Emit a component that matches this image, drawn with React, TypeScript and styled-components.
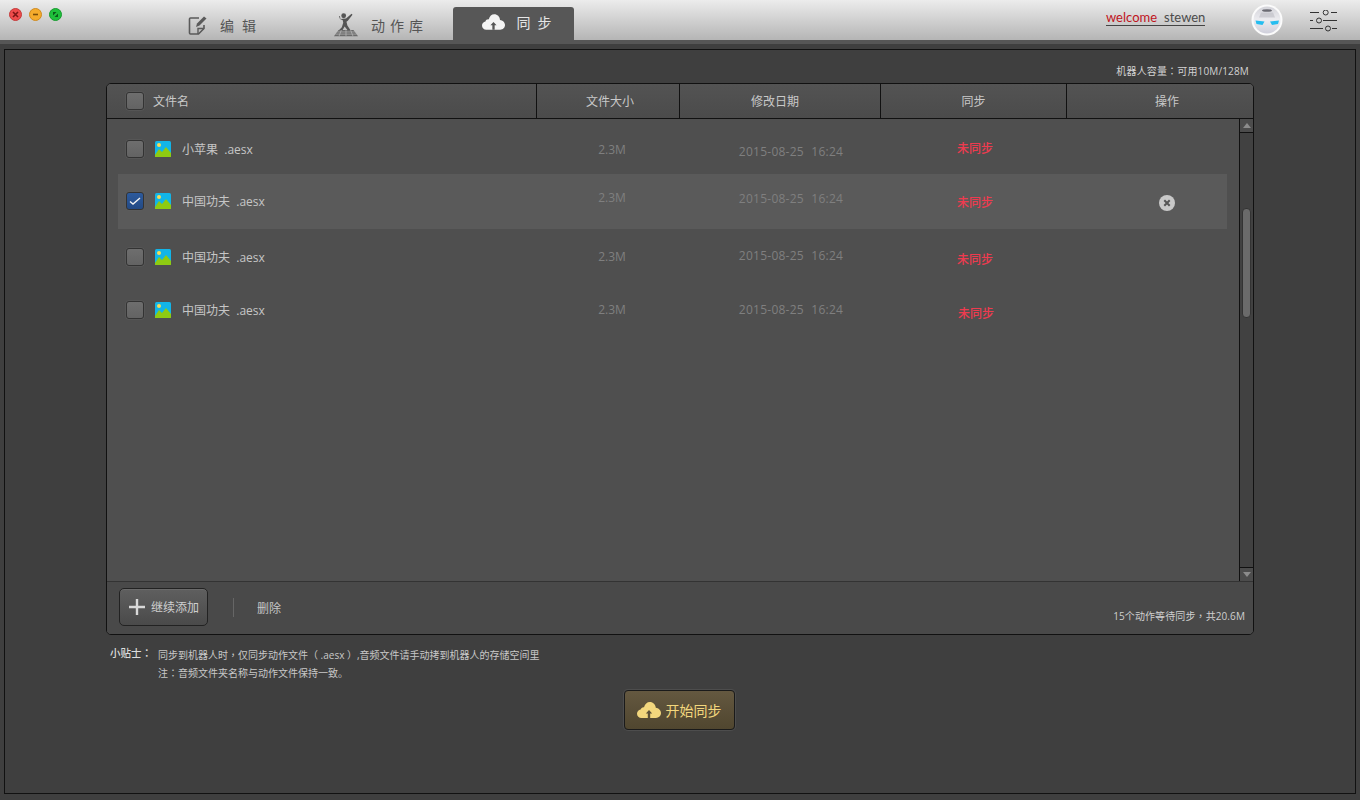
import styled, { createGlobalStyle } from "styled-components";

const GlobalStyle = createGlobalStyle`
  html, body {
    margin: 0;
    padding: 0;
    background: #3f3f3f;
  }
  body {
    font-family: "Open Sans", "Noto Sans CJK SC", sans-serif;
  }
`;

interface FileRow {
  id: number;
  title: string;
  height: number;
  checked?: boolean;
  active?: boolean;
  nameShift: number;
  sizeShift: number;
  dateShift: number;
  stateShift: number;
  stateLeft?: number;
}

const rows: FileRow[] = [
  { id: 1, title: "小苹果", height: 50, nameShift: -1, sizeShift: 0, dateShift: 2, stateShift: -1 },
  { id: 2, title: "中国功夫", height: 55, checked: true, active: true, nameShift: -2, sizeShift: -4, dateShift: -3, stateShift: 0 },
  { id: 3, title: "中国功夫", height: 56, nameShift: -1, sizeShift: -1, dateShift: -2, stateShift: 2 },
  { id: 4, title: "中国功夫", height: 53, nameShift: -4, sizeShift: -2, dateShift: -2, stateShift: 1, stateLeft: 1 },
];

const Page = styled.div`
  width: 1360px;
  height: 800px;
  overflow: hidden;
  display: flex;
  flex-direction: column;
  background: #3f3f3f;
`;

const TitleBar = styled.header`
  height: 40px;
  flex: none;
  display: flex;
  background: linear-gradient(#ececec, #b5b5b5);
  border-bottom: 4px solid #565656;
`;

const TrafficLights = styled.div`
  width: 176px;
  display: flex;
  gap: 7px;
  padding: 8px 0 0 9px;
  box-sizing: border-box;
`;

const Light = styled.span<{ $bg: string; $edge: string }>`
  width: 11px;
  height: 11px;
  border-radius: 50%;
  background: ${(p) => p.$bg};
  border: 1px solid ${(p) => p.$edge};
  display: flex;
  align-items: center;
  justify-content: center;
`;

const Tab = styled.div<{ $width: number; $spacing: number; $active?: boolean }>`
  width: ${(p) => p.$width}px;
  height: ${(p) => (p.$active ? "33px" : "40px")};
  margin-top: ${(p) => (p.$active ? "7px" : "0")};
  display: flex;
  align-items: center;
  justify-content: center;
  gap: 12px;
  flex: none;
  font-size: 14px;
  letter-spacing: ${(p) => p.$spacing}px;
  white-space: nowrap;
  color: ${(p) => (p.$active ? "#e6e6e6" : "#555")};
  background: ${(p) => (p.$active ? "#575757" : "transparent")};
  border-radius: ${(p) => (p.$active ? "3px 3px 0 0" : "0")};
  padding: ${(p) => (p.$active ? "0 0 3px 6px" : "10px 0 0 0")};
  box-sizing: border-box;

  span {
    margin-right: ${(p) => -p.$spacing}px;
  }
`;

const TabGap = styled.div<{ $width: number }>`
  width: ${(p) => p.$width}px;
  flex: none;
`;

const UserBlock = styled.div`
  margin-left: auto;
  display: flex;
  align-items: flex-start;
`;

const Welcome = styled.div`
  width: 99px;
  margin-top: 9px;
  font-family: "Lato", "Open Sans", sans-serif;
  font-size: 13px;
  line-height: 16px;
  color: #4b4b4b;
  white-space: nowrap;
  border-bottom: 1px solid #444;

  span {
    color: #c0141c;
    margin-right: 7px;
  }
`;

const Avatar = styled.svg`
  width: 32px;
  height: 32px;
  margin: 4px 0 0 46px;
  flex: none;
`;

const Settings = styled.svg`
  width: 28px;
  height: 22px;
  margin: 10px 22px 0 27px;
  flex: none;
`;

const Main = styled.main`
  flex: 1;
  margin: 5px 4px 6px 4px;
  border: 1px solid #111;
  background: #3f3f3f;
  display: flex;
  flex-direction: column;
  align-items: flex-start;
  padding: 0 0 0 101px;
  min-height: 0;
`;

const Capacity = styled.div`
  width: 1143px;
  height: 33px;
  flex: none;
  box-sizing: border-box;
  padding: 13px 0 0 0;
  text-align: right;
  font-size: 10px;
  letter-spacing: 0.15px;
  line-height: 15px;
  color: #d2d2d2;
`;

const Punct = styled.span`
  font-family: "Noto Sans CJK TC", sans-serif;
`;

const Panel = styled.section`
  width: 1148px;
  height: 552px;
  flex: none;
  box-sizing: border-box;
  border: 1px solid #111;
  border-radius: 5px;
  background: #4f4f4f;
  display: flex;
  flex-direction: column;
  overflow: hidden;
`;

const HeaderRow = styled.div`
  height: 34px;
  flex: none;
  display: grid;
  grid-template-columns: 429px 143px 201px 186px 1fr;
  border-bottom: 1px solid #111;
  background: linear-gradient(#535353, #4b4b4b);
`;

const HeaderCell = styled.div<{ $left?: number; $right?: number }>`
  display: flex;
  align-items: center;
  justify-content: center;
  font-size: 12px;
  color: #c9c9c9;
  padding-left: ${(p) => p.$left || 0}px;
  padding-right: ${(p) => p.$right || 0}px;
  border-left: 1px solid #111;
  box-sizing: border-box;
`;

const NameHeader = styled.div`
  display: flex;
  align-items: center;
  gap: 9px;
  padding-left: 19px;
  font-size: 12px;
  color: #c9c9c9;
`;

const Body = styled.div`
  flex: 1;
  min-height: 0;
  display: flex;
  border-bottom: 1px solid #333;
`;

const List = styled.div`
  flex: 1;
  padding: 5px 12px 0 11px;
  box-sizing: border-box;
`;

const Row = styled.div<{ $height: number; $active?: boolean }>`
  height: ${(p) => p.$height}px;
  display: grid;
  grid-template-columns: 419px 150px 208px 160px 1fr;
  align-items: center;
  background: ${(p) => (p.$active ? "#5a5a5a" : "transparent")};
`;

const NameCell = styled.div<{ $shift: number }>`
  display: flex;
  align-items: center;
  padding-left: 8px;
  margin-top: ${(p) => p.$shift}px;
  font-size: 12px;
  color: #c6c6c6;
  white-space: pre;
`;

const Check = styled.span<{ $checked?: boolean }>`
  width: 16px;
  height: 16px;
  flex: none;
  display: flex;
  align-items: center;
  justify-content: center;
  border-radius: 3px;
  border: 1px solid #333;
  box-shadow: 0 0 0 0.5px #5f5f5f;
  background: ${(p) => (p.$checked ? "linear-gradient(#2d5a9c, #234a85)" : "linear-gradient(#6e6e6e, #636363)")};
`;

const FileIcon = styled.svg`
  width: 16px;
  height: 16px;
  flex: none;
  margin: 0 11px 0 11px;
`;

const SizeCell = styled.div<{ $shift: number }>`
  text-align: center;
  font-size: 12px;
  color: #7f7f7f;
  margin-top: ${(p) => p.$shift * 2}px;
`;

const DateCell = styled(SizeCell)`
  word-spacing: 4px;
  letter-spacing: 0.25px;
`;

const StateCell = styled.div<{ $shift: number; $left?: number }>`
  text-align: center;
  font-size: 12px;
  font-weight: 500;
  color: #ee3b4f;
  margin-top: ${(p) => p.$shift * 2}px;
  padding-left: ${(p) => (p.$left || 0) * 2}px;
`;

const ActionCell = styled.div`
  display: flex;
  justify-content: flex-end;
  padding-right: 52px;
`;

const RemoveIcon = styled.svg`
  width: 16px;
  height: 16px;
  margin-top: 2px;
`;

const Scrollbar = styled.div`
  width: 13px;
  flex: none;
  display: flex;
  flex-direction: column;
  border-left: 1px solid #111;
  background: #414141;
`;

const ScrollButton = styled.div<{ $down?: boolean }>`
  height: 13px;
  flex: none;
  display: flex;
  align-items: center;
  justify-content: center;
  background: #4c4c4c;
  border-top: ${(p) => (p.$down ? "1px solid #111" : "none")};
  border-bottom: ${(p) => (p.$down ? "none" : "1px solid #111")};

  &::after {
    content: "";
    width: 0;
    height: 0;
    border-left: 4px solid transparent;
    border-right: 4px solid transparent;
    border-bottom: ${(p) => (p.$down ? "none" : "5px solid #8c8c8c")};
    border-top: ${(p) => (p.$down ? "5px solid #8c8c8c" : "none")};
  }
`;

const ScrollTrack = styled.div`
  flex: 1;
  padding: 75px 2px 0 2px;
`;

const ScrollThumb = styled.div`
  height: 110px;
  border-radius: 4px;
  background: #6a6a6a;
  border: 1px solid #333;
  box-sizing: border-box;
`;

const Footer = styled.div`
  height: 52px;
  flex: none;
  display: flex;
  align-items: center;
  padding: 0 8px 1px 12px;
  background: #494949;
  box-sizing: border-box;
`;

const AddButton = styled.button`
  width: 89px;
  height: 38px;
  margin-bottom: 1px;
  display: flex;
  align-items: center;
  gap: 6px;
  padding: 0 0 0 9px;
  box-sizing: border-box;
  border: 1px solid #222;
  border-radius: 5px;
  background: linear-gradient(#5f5f5f, #4a4a4a);
  box-shadow: inset 0 1px 0 #6a6a6a;
  color: #cfcfcf;
  font: 12px "Open Sans", "Noto Sans CJK SC", sans-serif;
`;

const Divider = styled.span`
  width: 1px;
  height: 19px;
  background: #666;
  margin: 0 23px 0 25px;
`;

const DeleteLink = styled.span`
  font-size: 12px;
  color: #c6c6c6;
`;

const WaitText = styled.span`
  margin-left: auto;
  padding: 16px 0 0 0;
  font-size: 10px;
  letter-spacing: 0.1px;
  color: #cfcfcf;
`;

const Tips = styled.div`
  display: flex;
  padding: 10px 0 0 4px;
  height: 44px;
  flex: none;
  box-sizing: border-box;
`;

const TipLabel = styled.div`
  width: 48px;
  font-size: 10.5px;
  line-height: 15px;
  font-weight: 500;
  color: #dcdcdc;
  flex: none;
`;

const TipLines = styled.div`
  font-size: 10px;
  line-height: 18px;
  padding-top: 1px;
  color: #c8c8c8;
`;

const SyncWrap = styled.div`
  width: 1146px;
  display: flex;
  justify-content: center;
  padding: 11px 0 0 0;
  box-sizing: border-box;
`;

const SyncButton = styled.button`
  width: 111px;
  height: 40px;
  display: flex;
  align-items: center;
  justify-content: center;
  gap: 5px;
  padding: 0;
  border: 1px solid #1a1a1a;
  border-radius: 4px;
  background: linear-gradient(#645840, #50462f);
  box-shadow: 0 0 0 1px #4d4d4d;
  color: #f3d77d;
  font: 14px "Open Sans", "Noto Sans CJK SC", sans-serif;
`;

const CloudUp = ({ fill, arrow, width, height }: { fill: string; arrow: string; width: number; height: number }) => (
  <svg width={width} height={height} viewBox="0 0 24 16" style={{ flex: "none" }}>
    <path
      d="M4.500 16C2 16 0 14.200 0 11.800 0 9.700 1.500 8 3.600 7.600 4 6 5.500 5 7 5.300 8 2 10 0 12.800 0c3.300 0 5.700 2.500 6 5.800 2.700.3 5.200 2.400 5.200 5.300 0 2.800-2.200 4.900-5 4.900z"
      fill={fill}
    />
    <path d="M12 8l-3.200 3.400h2V16h2.400v-4.600h2z" fill={arrow} />
  </svg>
);

const FileGlyph = () => (
  <FileIcon viewBox="0 0 16 16">
    <rect width="16" height="16" rx="1.500" fill="#12b5e8" />
    <circle cx="4" cy="4" r="2" fill="#f7dc55" />
    <path d="M0 14l4-6 3 3 4-5 5 6v3.500a.5.5 0 0 1-.5.5H.5a.5.5 0 0 1-.5-.5z" fill="#8ecb12" />
  </FileIcon>
);

const CheckBox = ({ checked }: { checked?: boolean }) => (
  <Check $checked={checked}>
    {checked && (
      <svg width="12" height="10" viewBox="0 0 12 10">
        <path d="M1 5.500l3 2.500 7-6" fill="none" stroke="#f2f2f2" strokeWidth="1.400" />
      </svg>
    )}
  </Check>
);

export default function App() {
  return (
    <Page>
      <GlobalStyle />
      <TitleBar>
        <TrafficLights>
          <Light $bg="#ee4b4b" $edge="#c43a3a">
            <svg width="7" height="7" viewBox="0 0 7 7">
              <path d="M1 1l5 5M6 1L1 6" stroke="#7c1515" strokeWidth="1.600" />
            </svg>
          </Light>
          <Light $bg="#f5ab2c" $edge="#cf8a1f">
            <svg width="7" height="7" viewBox="0 0 7 7">
              <path d="M1 3.500h5" stroke="#7a4d08" strokeWidth="1.600" />
            </svg>
          </Light>
          <Light $bg="#1fc13b" $edge="#169a2e">
            <svg width="7" height="7" viewBox="0 0 7 7">
              <path d="M1 1h3.500L1 4.500zM6 6H2.500L6 2.500z" fill="#0b5a1a" />
            </svg>
          </Light>
        </TrafficLights>
        <Tab $width={92} $spacing={8}>
          <svg width="20" height="20" viewBox="0 0 20 20" style={{ flex: "none" }}>
            <path d="M11 3H2.500A1 1 0 0 0 1.500 4v14a1 1 0 0 0 1 1h8l5.500-5.500V10" fill="none" stroke="#5a5a5a" strokeWidth="1.600" />
            <path d="M10 19v-5.500h6" fill="none" stroke="#5a5a5a" strokeWidth="1.400" />
            <path d="M8 12l1-3.500L16 1.500l2.500 2-7 7z" fill="#5a5a5a" />
          </svg>
          <span>编辑</span>
        </Tab>
        <TabGap $width={60} />
        <Tab $width={100} $spacing={5}>
          <svg width="26" height="26" viewBox="0 0 28 26" style={{ flex: "none" }}>
            <circle cx="11.500" cy="3" r="2.600" fill="#555" />
            <path
              d="M8 6.500l6-.5 6-5 1 1-5 6.500-1.500 1 1 4 3.500 5.500h-3l-3.500-4.500-2.500 4.500h-4l3.500-3.500 1.500-5-.5-2.500-3-1.500-1-3 1-.3z"
              fill="#555"
            />
            <path d="M6 18.500h16l5 6.500H1z" fill="#6a6a6a" />
            <path d="M4.500 20.500h19M2.500 22.800h23M9 18.500l-2.500 6.500M14 18.500v6.500M19 18.500l2.500 6.500" stroke="#c0c0c0" strokeWidth="0.700" />
          </svg>
          <span>动作库</span>
        </Tab>
        <TabGap $width={25} />
        <Tab $width={121} $spacing={7} $active>
          <CloudUp fill="#f4f4f4" arrow="#575757" width={23} height={16} />
          <span>同步</span>
        </Tab>
        <UserBlock>
          <Welcome>
            <span>welcome</span>stewen
          </Welcome>
          <Avatar viewBox="0 0 32 32">
            <defs>
              <linearGradient id="head" x1="0" y1="0" x2="0" y2="1">
                <stop offset="0" stopColor="#d4d4da" />
                <stop offset="0.5" stopColor="#ececf0" />
                <stop offset="1" stopColor="#cfcfdb" />
              </linearGradient>
            </defs>
            <circle cx="16" cy="16" r="15.500" fill="#fbfbfb" />
            <circle cx="16" cy="16" r="13.500" fill="url(#head)" />
            <ellipse cx="16" cy="6.500" rx="5" ry="1.300" fill="#6b6b73" />
            <path d="M10 8.500h12l2 5H8z" fill="#b4b4bc" opacity="0.500" />
            <path d="M4.500 16.500l9 1-2 3.500-6-1z" fill="#25bdf0" />
            <path d="M28 16.500l-9 1 2 3.500 6-1z" fill="#25bdf0" />
          </Avatar>
          <Settings viewBox="0 0 28 22" fill="none" stroke="#333" strokeWidth="1">
            <path d="M0 2.500h9M21 2.500h6M0 10.500h3M13 10.500h14M0 18.500h13M22 18.500h5" />
            <circle cx="15.700" cy="2.500" r="2.500" />
            <circle cx="9" cy="10.500" r="2.500" />
            <circle cx="18" cy="18.500" r="2.500" />
          </Settings>
        </UserBlock>
      </TitleBar>
      <Main>
        <Capacity>
          机器人容量<Punct>：</Punct>可用10M/128M
        </Capacity>
        <Panel>
          <HeaderRow>
            <NameHeader>
              <CheckBox />
              文件名
            </NameHeader>
            <HeaderCell $left={4}>文件大小</HeaderCell>
            <HeaderCell $right={10}>修改日期</HeaderCell>
            <HeaderCell>同步</HeaderCell>
            <HeaderCell $left={14}>操作</HeaderCell>
          </HeaderRow>
          <Body>
            <List>
              {rows.map((r) => (
                <Row key={r.id} $height={r.height} $active={r.active}>
                  <NameCell $shift={r.nameShift}>
                    <CheckBox checked={r.checked} />
                    <FileGlyph />
                    {r.title}  .aesx
                  </NameCell>
                  <SizeCell $shift={r.sizeShift}>2.3M</SizeCell>
                  <DateCell $shift={r.dateShift}>2015-08-25 16:24</DateCell>
                  <StateCell $shift={r.stateShift} $left={r.stateLeft}>未同步</StateCell>
                  <ActionCell>
                    {r.active && (
                      <RemoveIcon viewBox="0 0 16 16">
                        <circle cx="8" cy="8" r="8" fill="#c8c8c8" />
                        <path d="M5.300 5.300l5.400 5.400M10.700 5.300l-5.400 5.400" stroke="#555" strokeWidth="2" />
                      </RemoveIcon>
                    )}
                  </ActionCell>
                </Row>
              ))}
            </List>
            <Scrollbar>
              <ScrollButton />
              <ScrollTrack>
                <ScrollThumb />
              </ScrollTrack>
              <ScrollButton $down />
            </Scrollbar>
          </Body>
          <Footer>
            <AddButton>
              <svg width="16" height="16" viewBox="0 0 16 16" style={{ flex: "none" }}>
                <path d="M8 0v16M0 8h16" stroke="#d8d8d8" strokeWidth="2.400" />
              </svg>
              继续添加
            </AddButton>
            <Divider />
            <DeleteLink>删除</DeleteLink>
            <WaitText>
              15个动作等待同步<Punct>，</Punct>共20.6M
            </WaitText>
          </Footer>
        </Panel>
        <Tips>
          <TipLabel>
            小贴士<Punct>：</Punct>
          </TipLabel>
          <TipLines>
            <div>
              同步到机器人时<Punct>，</Punct>仅同步动作文件<Punct>（</Punct> .aesx <Punct>）</Punct>,音频文件请手动拷到机器人的存储空间里
            </div>
            <div>
              注<Punct>：</Punct>音频文件夹名称与动作文件保持一致。
            </div>
          </TipLines>
        </Tips>
        <SyncWrap>
          <SyncButton>
            <CloudUp fill="#f3d77d" arrow="#5b5038" width={24} height={16} />
            开始同步
          </SyncButton>
        </SyncWrap>
      </Main>
    </Page>
  );
}
